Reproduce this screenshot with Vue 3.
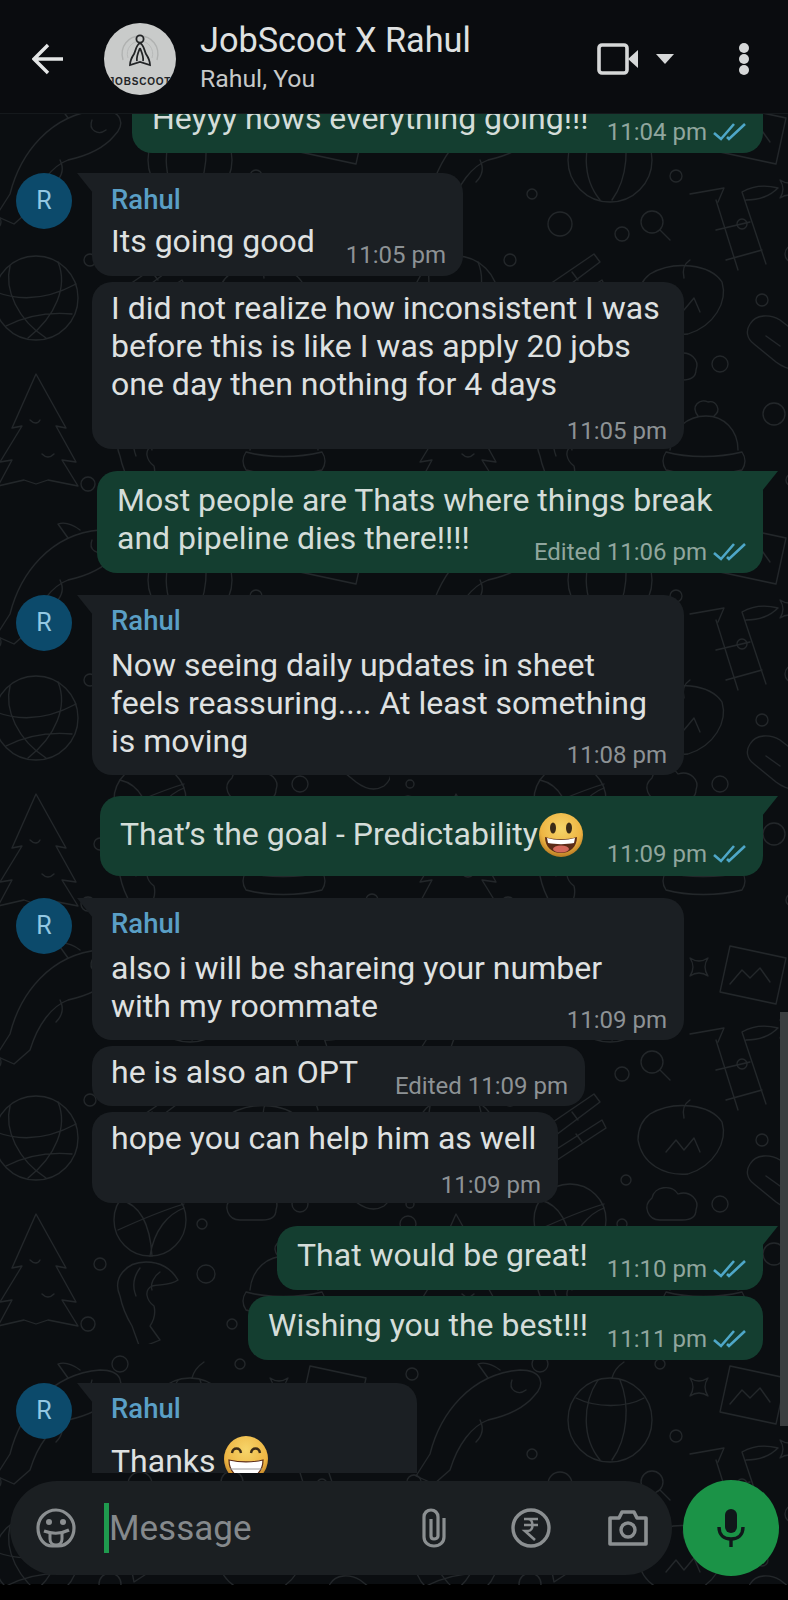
<template>
  <div class="phone">
    <header class="topbar">
      <svg class="back" viewBox="0 0 32 32" width="32" height="32">
        <path d="M31 16H3M16 2 2 16l14 14" fill="none" stroke="#e4e6e6" stroke-width="3.4" />
      </svg>
      <div class="group-pic">
        <svg viewBox="0 0 72 46" width="72" height="46">
          <path d="M19 30c-4-14 6-24 17-24s21 10 17 24" fill="none" stroke="#b0b2b1" stroke-width="1.4" />
          <path d="M24 28c-3-9 4-17 12-17s15 8 12 17" fill="none" stroke="#b8bab9" stroke-width="1" />
          <circle cx="36" cy="9" r="3.6" fill="#c9cbca" stroke="#222426" stroke-width="1.8" />
          <path d="M36 13c-4 2-4 7-6 11-2 3-4 7-4 11l10-3 10 3c0-4-2-8-4-11-2-4-2-9-6-11zM36 18c-2 5-4 9-3 13M36 18c2 5 4 9 3 13" fill="#c9cbca" stroke="#222426" stroke-width="1.8" />
        </svg>
        <span>JOBSCOOT</span>
      </div>
      <div class="title-block">
        <div class="title">JobScoot X Rahul</div>
        <div class="subtitle">Rahul, You</div>
      </div>
      <svg class="video" viewBox="0 0 42 32" width="42" height="32">
        <rect x="2" y="2" width="28" height="28" rx="3" fill="none" stroke="#d6d8d8" stroke-width="3.6" />
        <path d="M31 16 41 7v18z" fill="#d6d8d8" />
      </svg>
      <span class="caret"></span>
      <div class="dots"><i></i><i></i><i></i></div>
    </header>

    <main class="chat">
      <svg class="doodles" width="788" height="1471">
        <defs>
          <pattern id="doodle" width="420" height="420" patternUnits="userSpaceOnUse" patternTransform="translate(-30 -30)">
            <g fill="none" stroke="#23272a" stroke-width="1.3" stroke-linejoin="round" stroke-linecap="round">
              <circle v-for="(d, i) in specks" :key="i" :cx="d[0]" :cy="d[1]" :r="d[2]" />
              <!-- fish -->
              <path d="M40 110c10-40 40-80 90-84 22 0 26 14 14 26-10 12-28 20-46 24-16 6-30 24-38 50l-16 14-18-8z" />
              <path d="M110 26c-8-6-16-8-22-6l10 14M90 76c4 8 2 16-4 22M122 36c-4 10 6 16 14 10" />
              <!-- beach ball -->
              <circle cx="220" cy="76" r="42" />
              <path d="M208 36c-16 24-16 58 2 80M230 36c10 24 8 58-8 80M186 54c20 10 50 10 68 0M222 34c2-8 6-12 12-16" />
              <!-- sparkle -->
              <path d="M300 34c6 4 12 4 18 0-4 6-4 12 0 18-6-4-12-4-18 0 4-6 4-12 0-18z" />
              <path d="M390 96c6 4 12 4 18 0-4 6-4 12 0 18-6-4-12-4-18 0 4-6 4-12 0-18z" />
              <!-- photo and arrow -->
              <path d="M340 22l56 12-10 46-56-12zM340 60l12-14 8 8 10-10 10 14" />
              <!-- bamboo -->
              <path d="M300 110l34-6-6 14M326 116l22 70M352 108l24 72M326 146l34-8M336 176l36-10M352 108c14-8 28-6 36-4-8 8-20 12-32 12" />
              <!-- globe -->
              <circle cx="66" cy="214" r="42" />
              <path d="M40 182c-6 24 8 54 36 72M88 178c10 24-2 54-30 76M26 208c26 10 54 6 80-8M36 242c20-10 44-14 66-12" />
              <!-- chopsticks -->
              <path d="M160 200l44-30 6 8-48 36zM162 228l50-32 4 8-52 34zM182 188l6 8M186 210l6 8" />
              <!-- basketball -->
              <circle cx="180" cy="296" r="36" />
              <path d="M150 276c18 4 30 22 32 56M214 284c-16 6-30 22-34 48M148 306c22-10 46-20 66-26" />
              <!-- strawberry -->
              <path d="M260 190c24-14 60-10 72 8 6 20-8 44-34 52-24 2-46-10-50-34 0-10 4-20 12-26zM276 228l10-12 8 10 10-12 6 14M300 176c-6 4-8 10-6 18" />
              <!-- cloud -->
              <path d="M270 296c-12 0-18-14-8-22 2-12 20-14 26-4 12-4 22 6 18 16 0 8-6 10-14 10z" />
              <!-- tree -->
              <path d="M66 290l30 54-10-2 20 36-14-2 16 26-30-6-12 4-12-4-26 6 14-26-12 2 22-36-10 2z" />
              <path d="M60 336c4 4 8 4 10 0M72 370c4 4 8 4 12 0" />
              <!-- shrimp -->
              <path d="M150 372c-8-18 6-34 26-34 16 0 26 8 32 18-8 6-18 4-26 6-8 4-6 14 2 20 2 8 0 14-4 20l10 14-20 8-8-22c-6-10-10-20-12-30z" />
              <path d="M170 344c-6 8-8 18-4 28M190 348c-6 4-10 12-8 18" />
              <!-- beanie -->
              <path d="M280 366c2-22 18-34 36-34s32 14 32 34M276 368c22 6 52 6 76 0 4 6 4 12 0 18-24 6-54 6-76 0-4-6-4-12 0-18zM308 332c-8-10 2-18 10-14 8-2 14 8 6 14" />
              <!-- board -->
              <path d="M360 240c6-10 20-10 30-4l26 20c8 8 6 20-2 26-10 6-20 2-28-4l-22-18c-8-6-8-14-4-20zM376 252l14 10" />
              <!-- magnifier -->
              <circle cx="262" cy="138" r="11" /><path d="M270 146l10 10" />
            </g>
          </pattern>
        </defs>
        <rect width="788" height="1471" fill="url(#doodle)" />
      </svg>

      <div class="scroll-thumb"></div>

      <section class="messages">
        <template v-for="m in messages" :key="m.id">
          <div class="row" :class="[m.mine ? 'mine' : 'theirs', m.cut ? 'cut' : '']" :style="{ marginTop: m.gap + 'px' }">
            <div v-if="m.sender" class="avatar">R</div>
            <div class="bubble" :class="{ tail: m.tail, stacked: m.stacked, tight: m.tight, tall: m.tall }" :style="{ width: m.width + 'px' }">
              <div v-if="m.sender" class="sender">{{ m.sender }}</div>
              <div class="line-wrap" :class="{ 'after-name': m.sender }">
                <div class="text">
                  <div v-for="(line, i) in m.lines" :key="i" class="line">{{ line }}<svg v-if="m.emoji === 'smile'" class="emoji" viewBox="0 0 46 46" width="46" height="46">
                      <defs>
                        <radialGradient id="face" cx="50%" cy="35%" r="65%"><stop offset="0%" stop-color="#f6d56a" /><stop offset="70%" stop-color="#eeb543" /><stop offset="100%" stop-color="#b87a22" /></radialGradient>
                      </defs>
                      <ellipse cx="23" cy="23" rx="22" ry="22" fill="url(#face)" />
                      <ellipse cx="15" cy="16" rx="3" ry="5.5" fill="#3a2a17" />
                      <ellipse cx="31" cy="16" rx="3" ry="5.5" fill="#3a2a17" />
                      <path d="M7 25c10 3 22 3 32 0 0 10-7 16-16 16S7 35 7 25z" fill="#5b2b17" />
                      <path d="M9 26c9 2.500 19 2.500 28 0l-1 5c-8 1.500-18 1.500-26 0z" fill="#fff" />
                      <ellipse cx="23" cy="37" rx="8" ry="3.500" fill="#d4695c" />
                    </svg><svg v-if="m.emoji === 'grin'" class="emoji grin" viewBox="0 0 46 46" width="46" height="46">
                      <defs>
                        <radialGradient id="face2" cx="50%" cy="30%" r="70%"><stop offset="0%" stop-color="#f6d56a" /><stop offset="70%" stop-color="#eeb543" /><stop offset="100%" stop-color="#b87a22" /></radialGradient>
                      </defs>
                      <ellipse cx="23" cy="23" rx="22" ry="23" fill="url(#face2)" />
                      <path d="M9 17c1-6 8-6 9 0M28 17c1-6 8-6 9 0" fill="none" stroke="#3a2a17" stroke-width="2.400" />
                      <path d="M6 24c11 2.500 23 2.500 34 0 0 11-7 18-17 18S6 35 6 24z" fill="#fff" stroke="#5b2b17" stroke-width="1.200" />
                      <path d="M7 33h32" stroke="#9a9a9a" stroke-width="1" />
                    </svg></div>
                </div>
                <div v-if="m.time" class="meta">
                  <span>{{ m.time }}</span>
                  <svg v-if="m.mine" class="ticks" viewBox="0 0 33 18" width="33" height="18">
                    <path d="M1 10l7 6L21 1M14 14l2 2L32 1" fill="none" stroke="#4ea7c8" stroke-width="2.600" />
                  </svg>
                </div>
              </div>
            </div>
          </div>
        </template>
      </section>

      <div class="composer-row">
        <div class="composer">
          <svg class="ico sticker" viewBox="0 0 40 40" width="40" height="40">
            <path d="M20 2C10 2 2 10 2 20c0 10 6 18 14 18h6c10 0 16-9 16-18S30 2 20 2z" fill="none" stroke="#8b8f91" stroke-width="3.200" />
            <circle cx="13" cy="14" r="3" fill="#8b8f91" /><circle cx="27" cy="14" r="3" fill="#8b8f91" />
            <path d="M8 23c8 3 17 3 25-1" fill="none" stroke="#8b8f91" stroke-width="3.200" />
            <path d="M14 25v6c0 3 2 6 6 6s6-3 6-6v-7" fill="none" stroke="#8b8f91" stroke-width="3" />
          </svg>
          <span class="cursor"></span>
          <span class="placeholder">Message</span>
          <svg class="ico clip" viewBox="0 0 26 40" width="26" height="40">
            <path d="M23 10v19c0 5-4 9-10 9S3 34 3 29V9c0-4 3-7 7-7s7 3 7 7v19c0 2-2 3-4 3s-3-1-3-3V11" fill="none" stroke="#8b8f91" stroke-width="3.200" />
          </svg>
          <svg class="ico rupee" viewBox="0 0 40 40" width="40" height="40">
            <circle cx="20" cy="20" r="18" fill="none" stroke="#8b8f91" stroke-width="3.400" />
            <path d="M13 11h14M13 17h14M13 11h4c6 0 6 12 0 12h-3l10 9" fill="none" stroke="#8b8f91" stroke-width="2.600" />
          </svg>
          <svg class="ico camera" viewBox="0 0 42 40" width="42" height="40">
            <path d="M3 10h9l3-6h12l3 6h9v26H3z" fill="none" stroke="#8b8f91" stroke-width="3.600" stroke-linejoin="round" />
            <circle cx="21" cy="22" r="7" fill="none" stroke="#8b8f91" stroke-width="3.400" />
          </svg>
        </div>
        <div class="mic">
          <svg viewBox="0 0 28 38" width="28" height="38">
            <rect x="8" y="0" width="12" height="24" rx="6" fill="#10171a" />
            <path d="M2 18c0 8 5 12 12 12s12-4 12-12" fill="none" stroke="#10171a" stroke-width="3.400" />
            <path d="M14 29v9" stroke="#10171a" stroke-width="3.400" />
          </svg>
        </div>
      </div>
    </main>
    <div class="nav-strip"></div>
  </div>
</template>

<script setup>
const messages = [
  { id: 1, mine: true, gap: -25, width: 631, lines: ["Heyyy hows everything going!!!"], time: "11:04 pm" },
  { id: 2, sender: "Rahul", tail: true, tight: true, gap: 20, width: 371, lines: ["Its going good"], time: "11:05 pm" },
  { id: 3, gap: 6, width: 592, stacked: true, lines: ["I did not realize how inconsistent I was", "before this is like I was apply 20 jobs", "one day then nothing for 4 days"], time: "11:05 pm" },
  { id: 4, mine: true, tail: true, gap: 22, width: 666, lines: ["Most people are Thats where things break", "and pipeline dies there!!!!"], time: "Edited 11:06 pm" },
  { id: 5, sender: "Rahul", tail: true, gap: 22, width: 592, lines: ["Now seeing daily updates in sheet", "feels reassuring.... At least something", "is moving"], time: "11:08 pm" },
  { id: 6, mine: true, tail: true, tall: true, gap: 21, width: 663, lines: ["That’s the goal - Predictability"], emoji: "smile", time: "11:09 pm" },
  { id: 7, sender: "Rahul", tail: true, gap: 22, width: 592, lines: ["also i will be shareing your number", "with my roommate"], time: "11:09 pm" },
  { id: 8, gap: 6, width: 493, lines: ["he is also an OPT"], time: "Edited 11:09 pm" },
  { id: 9, gap: 6, width: 466, stacked: true, lines: ["hope you can help him as well"], time: "11:09 pm" },
  { id: 10, mine: true, tail: true, gap: 23, width: 486, lines: ["That would be great!"], time: "11:10 pm" },
  { id: 11, mine: true, gap: 6, width: 515, lines: ["Wishing you the best!!!"], time: "11:11 pm" },
  { id: 12, sender: "Rahul", tail: true, cut: true, gap: 23, width: 325, lines: ["Thanks "], emoji: "grin" },
]

// little rings scattered between the wallpaper drawings
const specks = [
  [22, 30, 6], [150, 20, 8], [270, 20, 5], [142, 110, 5], [170, 140, 12], [24, 138, 7],
  [286, 92, 6], [120, 176, 6], [140, 240, 11], [232, 150, 7], [236, 256, 5], [352, 140, 5],
  [404, 170, 9], [372, 216, 6], [330, 280, 8], [18, 300, 8], [130, 340, 6], [236, 350, 9],
  [262, 400, 5], [384, 330, 11], [402, 396, 6], [232, 300, 5], [118, 400, 7], [20, 280, 4],
]
</script>

<style>
html, body {
  margin: 0;
  background: #000;
}
</style>

<style scoped>
.phone {
  width: 788px;
  height: 1600px;
  display: flex;
  flex-direction: column;
  overflow: hidden;
  background: #0b0e11;
  font-family: Roboto, "Liberation Sans", sans-serif;
  color: #e3e5e5;
}

.topbar {
  height: 114px;
  flex: none;
  display: flex;
  align-items: center;
  background: #0a0c0f;
  border-bottom: 1px solid #15191c;
  box-sizing: border-box;
  position: relative;
  z-index: 2;
}

.back {
  margin-left: 32px;
  margin-top: 4px;
}

.group-pic {
  width: 72px;
  height: 72px;
  margin-left: 40px;
  margin-top: 4px;
  border-radius: 50%;
  background: #c9cbca;
  display: flex;
  flex-direction: column;
  align-items: center;
  padding-top: 7px;
  box-sizing: border-box;
  overflow: hidden;
}

.group-pic span {
  font-family: "Liberation Sans", sans-serif;
  font-size: 10px;
  font-weight: 700;
  letter-spacing: 0.8px;
  color: #222426;
  white-space: nowrap;
}

.title-block {
  margin-left: 24px;
  width: 397px;
  margin-top: 2px;
}

.title {
  font-size: 34.3px;
  line-height: 40px;
  color: #dfe1e1;
}

.subtitle {
  font-size: 24.8px;
  line-height: 32px;
  margin-top: 3px;
  color: #c6c9c9;
}

.video {
  margin-top: 4px;
}

.caret {
  width: 0;
  height: 0;
  margin-left: 17px;
  margin-top: 5px;
  border-left: 9px solid transparent;
  border-right: 9px solid transparent;
  border-top: 10px solid #d6d8d8;
}

.dots {
  margin-left: 65px;
  margin-top: 4px;
  display: flex;
  flex-direction: column;
  gap: 1px;
}

.dots i {
  width: 10px;
  height: 10px;
  border-radius: 50%;
  background: #d6d8d8;
}

.chat {
  flex: 1;
  min-height: 0;
  position: relative;
  display: flex;
  flex-direction: column;
}

.doodles {
  position: absolute;
  left: 0;
  top: 0;
}

.scroll-thumb {
  position: absolute;
  right: 0;
  top: 898px;
  width: 8px;
  height: 414px;
  background: #3b3e40;
  z-index: 1;
}

.messages {
  position: relative;
  height: 1359px;
  flex: none;
  overflow: hidden;
  display: flex;
  flex-direction: column;
}

.row {
  display: flex;
  flex: none;
  align-items: flex-start;
}

.theirs {
  padding-left: 92px;
  position: relative;
}

.mine {
  justify-content: flex-end;
  padding-right: 25px;
}

.avatar {
  position: absolute;
  left: 16px;
  top: 0;
  width: 56px;
  height: 56px;
  border-radius: 50%;
  background: #0c4a6b;
  color: #93c8e2;
  font-size: 25px;
  line-height: 56px;
  text-align: center;
}

.bubble {
  position: relative;
  flex: none;
  box-sizing: border-box;
  background: #1b1f23;
  border-radius: 20px;
  padding: 7px 17px 15px 19px;
}

.mine .bubble {
  background: #143e30;
  padding: 10px 17px 16px 20px;
}

.mine .bubble.tall {
  padding-top: 19px;
  padding-bottom: 23px;
}

.bubble.tight {
  padding-top: 8px;
  padding-bottom: 16px;
}

.bubble.stacked {
  padding-bottom: 2px;
}

.bubble.tail::before {
  content: "";
  position: absolute;
  top: 0;
  width: 16px;
  height: 20px;
  background: inherit;
}

.theirs .bubble.tail {
  border-top-left-radius: 0;
}

.theirs .bubble.tail::before {
  left: -15px;
  clip-path: polygon(0 0, 100% 0, 100% 100%);
}

.mine .bubble.tail {
  border-top-right-radius: 0;
}

.mine .bubble.tail::before {
  right: -15px;
  clip-path: polygon(0 0, 100% 0, 0 100%);
}

.sender {
  font-size: 27.5px;
  font-weight: 500;
  line-height: 38px;
  color: #5a9fc6;
}

/* text and time share one cell, so a long line can run above the time */
.line-wrap {
  display: grid;
}

.line-wrap.after-name {
  margin-top: 6px;
}

.tight .line-wrap.after-name {
  margin-top: 3px;
}

.line-wrap > * {
  grid-area: 1 / 1;
}

.stacked .line-wrap > .meta {
  grid-area: 2 / 1;
  margin-top: 12px;
  margin-bottom: 0;
}

.text {
  font-size: 32px;
  line-height: 38px;
  color: #dfe1e1;
}

.line {
  width: fit-content;
  white-space: pre;
}

.mine .text {
  color: #d4ddd9;
}

.emoji {
  vertical-align: -7px;
  margin: -12px 0 -6px;
}

.emoji.grin {
  vertical-align: -4px;
  margin: -16px 0 -6px;
}

.meta {
  justify-self: end;
  align-self: end;
  display: flex;
  align-items: center;
  gap: 6px;
  font-size: 24px;
  line-height: 32px;
  color: #8d9295;
  white-space: nowrap;
  margin-bottom: -11px;
}

.mine .meta {
  color: #90a69e;
}

.tall .meta {
  margin-bottom: -17px;
}

.cut .bubble {
  min-height: 110px;
  border-bottom-right-radius: 0;
}

.cut .line-wrap.after-name {
  margin-top: 14px;
}

.composer-row {
  position: relative;
  display: flex;
  align-items: center;
  padding-left: 10px;
  margin-top: 7px;
  gap: 11px;
}

.composer {
  width: 662px;
  height: 94px;
  background: #1b1f22;
  border-radius: 47px;
  display: flex;
  align-items: center;
}

.sticker {
  margin-left: 26px;
}

.cursor {
  width: 5px;
  height: 50px;
  background: #1f9a4e;
  margin-left: 28px;
}

.placeholder {
  font-size: 35px;
  color: #85898c;
  width: 312px;
}

.rupee {
  margin-left: 64px;
}

.camera {
  margin-left: 56px;
}

.mic {
  width: 96px;
  height: 96px;
  border-radius: 50%;
  background: #1b9347;
  display: flex;
  align-items: center;
  justify-content: center;
}

.nav-strip {
  height: 16px;
  flex: none;
  background: #000;
}
</style>
